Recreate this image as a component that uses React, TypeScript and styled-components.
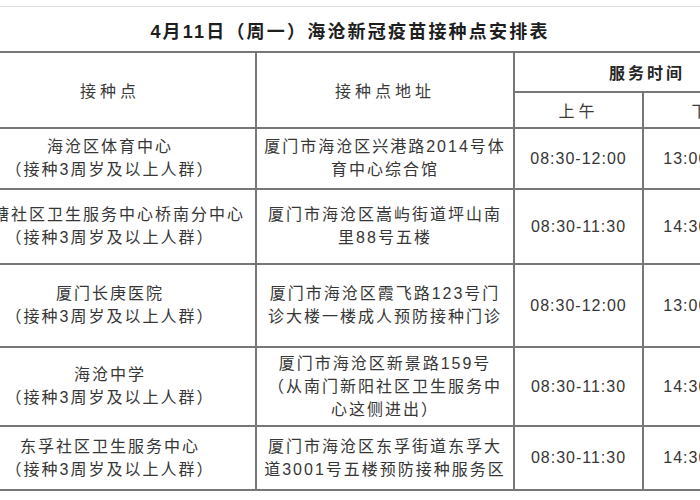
import * as React from 'react'
import styled, { createGlobalStyle } from 'styled-components'

const GlobalStyle = createGlobalStyle`
  html, body {
    margin: 0;
    padding: 0;
    background: #ffffff;
  }
`

interface ISite {
  name: string[]
  address: string[]
  morning: string
  afternoon: string
  height: number
}

const sites: ISite[] = [
  {
    name: ['海沧区体育中心', '（接种3周岁及以上人群）'],
    address: ['厦门市海沧区兴港路2014号体', '育中心综合馆'],
    morning: '08:30-12:00',
    afternoon: '13:00-17:00',
    height: 61
  },
  {
    name: ['石塘社区卫生服务中心桥南分中心', '（接种3周岁及以上人群）'],
    address: ['厦门市海沧区嵩屿街道坪山南', '里88号五楼'],
    morning: '08:30-11:30',
    afternoon: '14:30-17:00',
    height: 75
  },
  {
    name: ['厦门长庚医院', '（接种3周岁及以上人群）'],
    address: ['厦门市海沧区霞飞路123号门', '诊大楼一楼成人预防接种门诊'],
    morning: '08:30-12:00',
    afternoon: '13:00-17:00',
    height: 83
  },
  {
    name: ['海沧中学', '（接种3周岁及以上人群）'],
    address: ['厦门市海沧区新景路159号', '（从南门新阳社区卫生服务中', '心这侧进出）'],
    morning: '08:30-11:30',
    afternoon: '14:30-17:00',
    height: 79
  },
  {
    name: ['东孚社区卫生服务中心', '（接种3周岁及以上人群）'],
    address: ['厦门市海沧区东孚街道东孚大', '道3001号五楼预防接种服务区'],
    morning: '08:30-11:30',
    afternoon: '14:30-17:00',
    height: 64
  }
]

const Page = styled.div`
  width: 700px;
  height: 500px;
  overflow: hidden;
  padding-top: 6px;
  box-sizing: border-box;
  background: #fff;
`

const Table = styled.table`
  margin-left: -37px;
  width: 816px;
  table-layout: fixed;
  border-collapse: collapse;
  font-family: 'Liberation Sans', 'Noto Sans CJK SC', sans-serif;
  color: #363636;
`

const Row = styled.tr<{ $height: number }>`
  height: ${({ $height }) => $height}px;
`

const TitleCell = styled.td`
  border-top: 1px solid #dcdcdc;
  border-bottom: 2px solid #777;
  padding: 3px 44px 0 0;
  text-align: center;
  font-size: 18px;
  font-weight: bold;
  letter-spacing: 2.2px;
  color: #1e1e1e;
`

const HeadCell = styled.td`
  border: 2px solid #777;
  padding: 0;
  text-align: center;
  font-size: 16px;
  letter-spacing: 4px;
  color: #3a3a3a;
`

const GroupHead = styled(HeadCell)`
  font-weight: bold;
  letter-spacing: 3px;
  color: #262626;
`

const Cell = styled.td`
  border: 2px solid #777;
  padding: 0;
  text-align: center;
  vertical-align: middle;
  font-size: 16px;
  letter-spacing: 2px;
  line-height: 23px;
`

const TimeCell = styled(Cell)`
  letter-spacing: 1px;
`

const Line = styled.span`
  display: block;
  white-space: nowrap;
`

function Lines({ lines }: { lines: string[] }) {
  return (
    <>
      {lines.map((text, i) => (
        <Line key={i}>{text}</Line>
      ))}
    </>
  )
}

export default function App() {
  return (
    <Page>
      <GlobalStyle />
      <Table>
        <colgroup>
          <col style={{ width: 292 }} />
          <col style={{ width: 258 }} />
          <col style={{ width: 129 }} />
          <col style={{ width: 137 }} />
        </colgroup>
        <tbody>
          <Row $height={45}>
            <TitleCell colSpan={4}>4月11日（周一）海沧新冠疫苗接种点安排表</TitleCell>
          </Row>
          <Row $height={40}>
            <HeadCell rowSpan={2}>接种点</HeadCell>
            <HeadCell rowSpan={2}>接种点地址</HeadCell>
            <GroupHead colSpan={2}>服务时间</GroupHead>
          </Row>
          <Row $height={36}>
            <HeadCell>上午</HeadCell>
            <HeadCell>下午</HeadCell>
          </Row>
          {sites.map((site, i) => (
            <Row key={i} $height={site.height}>
              <Cell>
                <Lines lines={site.name} />
              </Cell>
              <Cell>
                <Lines lines={site.address} />
              </Cell>
              <TimeCell>{site.morning}</TimeCell>
              <TimeCell>{site.afternoon}</TimeCell>
            </Row>
          ))}
        </tbody>
      </Table>
    </Page>
  )
}
